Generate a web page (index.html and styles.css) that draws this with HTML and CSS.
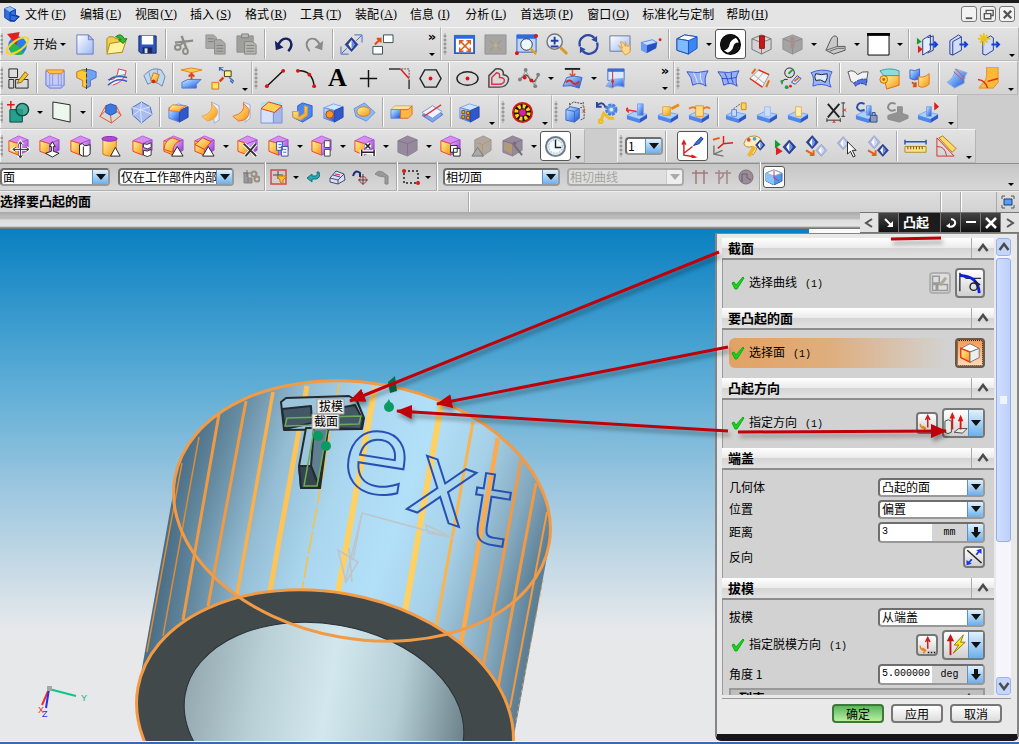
FILE: index.html
```html
<!DOCTYPE html>
<html lang="zh-CN">
<head>
<meta charset="utf-8">
<title>凸起</title>
<link rel="stylesheet" href="styles.css">
</head>
<body>
<svg class="defs" aria-hidden="true">
  <defs>
    <linearGradient id="gb" x1="0" y1="0" x2="1" y2="1"><stop offset="0" stop-color="#d4ebff"/><stop offset=".5" stop-color="#6ba2f6"/><stop offset="1" stop-color="#2348c8"/></linearGradient>
    <linearGradient id="gl" x1="0" y1="0" x2="1" y2="1"><stop offset="0" stop-color="#fff"/><stop offset="1" stop-color="#9db8f4"/></linearGradient>
    <linearGradient id="gy" x1="0" y1="0" x2="1" y2="1"><stop offset="0" stop-color="#fff6a0"/><stop offset="1" stop-color="#f79410"/></linearGradient>
    <linearGradient id="gp" x1="0" y1="0" x2="1" y2="1"><stop offset="0" stop-color="#ecc6ff"/><stop offset="1" stop-color="#8d22d0"/></linearGradient>
    <linearGradient id="skin" gradientUnits="userSpaceOnUse" x1="263" y1="0" x2="641" y2="0" gradientTransform="skewX(-10)">
      <stop offset="0" stop-color="#4b6f86"/><stop offset=".1" stop-color="#668ca2"/><stop offset=".25" stop-color="#94bdd4"/><stop offset=".42" stop-color="#abd8f0"/><stop offset=".6" stop-color="#b2e0f8"/><stop offset=".76" stop-color="#a5d0e8"/><stop offset=".9" stop-color="#84a8bd"/><stop offset="1" stop-color="#5c7f95"/>
    </linearGradient>
    <linearGradient id="bore" x1="0" y1="0" x2="1" y2="0"><stop offset="0" stop-color="#94a9b0"/><stop offset=".25" stop-color="#b9d0d6"/><stop offset=".5" stop-color="#d2e8ee"/><stop offset=".75" stop-color="#b4cdd4"/><stop offset="1" stop-color="#6c828a"/></linearGradient>
    <marker id="head" viewBox="0 0 16 14" refX="15" refY="7" markerWidth="16" markerHeight="14" markerUnits="userSpaceOnUse" orient="auto"><path d="M0 0 16 7 0 14Z" fill="#c00008" stroke="none"/></marker>
    <symbol id="cubeP" viewBox="0 0 24 24"><path d="M2 6 12 1 22 5 12 9Z" fill="#d78df4" stroke="#b860e0"/><path d="M2 6 12 9V21L2 17Z" fill="url(#gy)" stroke="#f04418"/><path d="M12 9 22 5V16L12 21Z" fill="url(#gp)" stroke="#a050cc"/></symbol>
    <symbol id="cubeG" viewBox="0 0 24 24"><path d="M2 6 12 1 22 5V16L12 22 2 18Z" fill="#96899e" stroke="#8d8198"/><path d="M2 6 12 9 22 5M12 9V21" stroke="#7f738a"/></symbol>
    <symbol id="cubeB" viewBox="0 0 24 24"><path d="M2 7 12 3 22 6 13 10Z" fill="#cfe6ff" stroke="#7ba5ee"/><path d="M2 7 13 10V22L2 18Z" fill="url(#gb)" stroke="#5c88e8"/><path d="M13 10 22 6V17L13 22Z" fill="#3158c8" stroke="#274ab2"/></symbol>
    <symbol id="base" viewBox="0 0 24 24"><path d="M1 15 9 11 22 14 14 19Z" fill="#add0ff" stroke="#7ba5ee"/><path d="M1 15 14 19V23L1 19Z" fill="#4d86ec" stroke="none"/><path d="M14 19 22 14V18L14 23Z" fill="#2c57c6" stroke="none"/></symbol>
    <symbol id="eye" viewBox="0 0 24 24"><path d="M12 1 22 12 12 23 2 12Z" fill="#2c4296" stroke="#1c2c78"/><path d="M12 5 17 12 12 19 7 12Z" fill="#fff" stroke="none"/><path d="M12 5 17 12 12 19Z" fill="#5b8cf0" stroke="none"/></symbol>
    <symbol id="eyeL" viewBox="0 0 24 24"><path d="M12 1 22 12 12 23 2 12Z" fill="#aeb7dc" stroke="#8e98c8"/><path d="M12 5 17 12 12 19 7 12Z" fill="#fff" stroke="none"/><path d="M12 5 17 12 12 19Z" fill="#c8d8f4" stroke="none"/></symbol>
    <symbol id="tick" viewBox="0 0 14 14"><path d="M1 7 3 6 5 9 12 1 13 2 6 13 4 13Z" fill="#18d21c" stroke="#0fae12"/></symbol>
    <symbol id="up" viewBox="0 0 12 10"><path d="M1.500 8 6 2 10.500 8" stroke="#4a4a4a" stroke-width="2.500"/></symbol>
  </defs>
</svg>

<div class="app">
<header class="menubar">
  <svg class="i logo" viewBox="0 0 20 20"><path d="M3 4 9 2 15 5V11L19 13 14 18 9 18 3 14Z" fill="#2f6fe0" stroke="#143c9c"/><path d="M3 4 9 2 15 5 9 8Z" fill="#8cc0ff" stroke="none"/><path d="M9 8 15 5M9 8V17L14 18 19 13 10 11" stroke="#0e2c80"/></svg>
  <nav class="menu">
    <a href="#">文件<span>(<u>F</u>)</span></a><a href="#">编辑<span>(<u>E</u>)</span></a><a href="#">视图<span>(<u>V</u>)</span></a><a href="#">插入<span>(<u>S</u>)</span></a><a href="#">格式<span>(<u>R</u>)</span></a><a href="#">工具<span>(<u>T</u>)</span></a><a href="#">装配<span>(<u>A</u>)</span></a><a href="#">信息<span>(<u>I</u>)</span></a><a href="#">分析<span>(<u>L</u>)</span></a><a href="#">首选项<span>(<u>P</u>)</span></a><a href="#">窗口<span>(<u>O</u>)</span></a><a href="#">标准化与定制</a><a href="#">帮助<span>(<u>H</u>)</span></a>
  </nav>
  <div class="winbtns">
    <button aria-label="最小化"><svg class="i" viewBox="0 0 14 14"><path d="M3 11H10" stroke="#555" stroke-width="2"/></svg></button>
    <button aria-label="还原"><svg class="i" viewBox="0 0 14 14"><path d="M4.500 5V2.500H12V8H10M2.500 6H9.500V11.500H2.500Z" stroke="#555" stroke-width="1.500"/></svg></button>
    <button aria-label="关闭"><svg class="i" viewBox="0 0 14 14"><path d="M3 3 11 11M11 3 3 11" stroke="#555" stroke-width="2.500"/></svg></button>
  </div>
</header>

<div class="bar">
  <div class="grp">
    <span class="grip first"></span>
    <button class="start"><svg class="i big" viewBox="0 0 24 24"><circle cx="12" cy="13" r="9" fill="#2480e8" stroke="none"/><path d="M4 12Q8 8 12 13T18 21Q9 24 5 17Z" fill="#22b84a" stroke="none"/><path d="M2 2 14 0 11 13Z" fill="#e02020" stroke="none"/><ellipse cx="12" cy="13" rx="12" ry="5" transform="rotate(-35 12 13)" stroke="#f6d428" stroke-width="2"/></svg>开始<i class="tri"></i></button>
    <button class="tb" aria-label="新建"><svg class="i" viewBox="0 0 24 24"><path d="M3 2H15L20 7V22H3Z" fill="url(#gl)" stroke="#6a78c8"/><path d="M15 2V7H20Z" fill="#b6c4f4" stroke="#6a78c8"/></svg></button>
    <button class="tb" aria-label="打开"><svg class="i" viewBox="0 0 24 24"><path d="M2 6 4 4H9L11 6H18V20H2Z" fill="#f1cf48" stroke="#a88818"/><path d="M5 11 22 8 18 20 2 22Z" fill="#fff29a" stroke="#a88818"/><path d="M11 4Q17-1 20 6H23L19 11 14 7H17Q15 4 11 4Z" fill="#3aba3a" stroke="#15801a"/></svg></button>
    <button class="tb" aria-label="保存"><svg class="i" viewBox="0 0 24 24"><path d="M3 3H21V21H5L3 19Z" fill="#2e56ba" stroke="#142868"/><path d="M6 3H18V12H6Z" fill="#fff" stroke="none"/><path d="M7 15H17V21H7Z" fill="#1a2858" stroke="none"/><path d="M9 16H12V21H9Z" fill="#dce4f4" stroke="none"/></svg></button>
    <span class="sep"></span>
    <button class="tb" aria-label="剪切"><svg class="i" viewBox="0 0 24 24"><path d="M2 10 21 8M9 3 14 16" stroke="#8b8b88" stroke-width="2.500"/><ellipse cx="5" cy="15" rx="3" ry="2.500" stroke="#8b8b88" stroke-width="2"/><ellipse cx="13" cy="19" rx="2.500" ry="3" stroke="#8b8b88" stroke-width="2"/><path d="M7 13 12 9" stroke="#8b8b88" stroke-width="2"/></svg></button>
    <button class="tb" aria-label="复制"><svg class="i" viewBox="0 0 24 24"><path d="M2 2H10L13 5V16H2Z" fill="#a9a9a6" stroke="#959595"/><path d="M11 7H18L22 11V22H11Z" fill="#a9a9a6" stroke="#8c8c8c"/><path d="M4 6H10M4 9H10M13 13H20M13 16H20M13 19H20" stroke="#808080"/></svg></button>
    <button class="tb" aria-label="粘贴"><svg class="i" viewBox="0 0 24 24"><path d="M2 3H19V20H2Z" fill="#9f9f9b" stroke="#909090"/><path d="M7 1H14V5H7Z" fill="#b9b9b5" stroke="#808080"/><path d="M10 9H18L22 12V22H10Z" fill="#b4b4b0" stroke="#858585"/><path d="M12 13H20M12 16H20M12 19H20" stroke="#808080"/></svg></button>
    <span class="sep"></span>
    <button class="tb" aria-label="撤销"><svg class="i" viewBox="0 0 24 24"><path d="M6 13Q11 3 18 7 23 12 17 19" stroke="#142264" stroke-width="2.500"/><path d="M3 8 4 18 12 15Z" fill="#142264" stroke="none"/></svg></button>
    <button class="tb" aria-label="重做"><svg class="i" viewBox="0 0 24 24"><path d="M18 13Q13 3 6 7 1 12 7 19" stroke="#8a8a8a" stroke-width="2"/><path d="M21 8 20 18 12 15Z" fill="#8a8a8a" stroke="none"/></svg></button>
    <span class="sep"></span>
    <button class="tb" aria-label="替换视图"><svg class="i" viewBox="0 0 24 24"><use href="#eye" x="4" y="4" width="16" height="16"/><path d="M1 14V22H9M2 21 7 16M15 2H23V10M22 3 17 8" stroke="#3c64c8"/></svg></button>
    <button class="tb" aria-label="窗口切换"><svg class="i" viewBox="0 0 24 24"><path d="M13 2H23V10H13ZM2 14H12V22H2Z" fill="#fff" stroke="#30504c"/><path d="M4 12 9 7M6 6H10V10" stroke="#e84a10" stroke-width="2"/></svg></button>
    <button class="more" aria-label="更多"><b>»</b><i class="tri"></i></button>
  </div>
  <div class="grp">
    <span class="grip"></span>
    <button class="tb" aria-label="适合窗口"><svg class="i" viewBox="0 0 24 24"><path d="M2 3H22V21H2Z" fill="#fff" stroke="#2d5fc8" stroke-width="2"/><path d="M1 2H23V6H1Z" fill="#2d6ae0" stroke="none"/><path d="M8 9 17 18M17 9 8 18M7 12V8H11M14 8H18V12M7 15V19H11M14 19H18V15" stroke="#e05a18" stroke-width="1.500"/></svg></button>
    <button class="tb" aria-label="适合选择"><svg class="i" viewBox="0 0 24 24"><path d="M1 2H23V22H1Z" fill="#a5a5a5" stroke="#949494"/><path d="M6 8 18 18M18 8 6 18" stroke="#aa9c6c" stroke-width="1.500"/><path d="M10 11H14V15H10Z" fill="#b4b0a0" stroke="none"/></svg></button>
    <button class="tb" aria-label="缩放窗口"><svg class="i" viewBox="0 0 24 24"><path d="M2 2H22V20H2Z" fill="#bcd6fc" stroke="#2d5fc8"/><path d="M2 2H22V6H2Z" fill="#2d6ae0" stroke="none"/><circle cx="12" cy="12" r="6" fill="#eef8ff" stroke="#333"/><path d="M16 16 22 22" stroke="#e0a020" stroke-width="2.500"/><circle cx="22" cy="3" r="2" fill="#e01010" stroke="none"/><circle cx="2" cy="21" r="2" fill="#e01010" stroke="none"/></svg></button>
    <button class="tb" aria-label="缩放"><svg class="i" viewBox="0 0 24 24"><circle cx="9" cy="9" r="8" fill="#e4ebf6" stroke="#777" stroke-width="1.500"/><path d="M5 8H13M9 4V12M5 14H13" stroke="#263c9a" stroke-width="2"/><path d="M15 15 22 22" stroke="#d69a28" stroke-width="3"/></svg></button>
    <button class="tb" aria-label="旋转"><svg class="i" viewBox="0 0 24 24"><path d="M3 14A9 9 0 0 1 18 5M21 10A9 9 0 0 1 6 19" stroke="#2c49a4" stroke-width="2.500"/><path d="M21 3V10L15 7ZM3 21V14L9 17Z" fill="#2c49a4" stroke="none"/></svg></button>
    <button class="tb" aria-label="平移"><svg class="i" viewBox="0 0 24 24"><path d="M2 3H23V19H2Z" fill="url(#gl)" stroke="#6d7894"/><path d="M11 13 15 16 13 9 16 10 18 14 18 9 20 14 23 13V20L18 23Z" fill="#ffd68a" stroke="#d8a050"/></svg></button>
    <button class="tb" aria-label="透视"><svg class="i" viewBox="0 0 24 24"><path d="M2 10 14 7 19 10 8 13Z" fill="#c2ddff" stroke="#5b86e0"/><path d="M2 10 8 13V21L2 18Z" fill="#6b9cf4" stroke="none"/><path d="M8 13 19 10 18 16 8 21Z" fill="#2450c4" stroke="none"/><circle cx="22" cy="7" r="1.500" fill="#e02020" stroke="none"/></svg></button>
    <span class="sep"></span>
    <button class="tb" aria-label="定向视图"><svg class="i" viewBox="0 0 24 24"><path d="M1 6 9 2 22 4V16L13 22 1 18Z" fill="#3c86f4" stroke="#1c50b4"/><path d="M1 6 9 2 22 4 13 8Z" fill="#fff" stroke="#1c50b4"/><path d="M1 6 13 8V22L1 18Z" fill="#80baff" stroke="#1c50b4"/></svg></button><button class="dd" aria-label="更多视图"><i class="tri"></i></button>
    <button class="tb on" aria-label="着色"><svg class="i" viewBox="0 0 24 24"><circle cx="12" cy="12" r="10" fill="#fff" stroke="#000" stroke-width="2"/><path d="M15 2A10 10 0 0 0 4 18Q10 18 11 12 12 7 18 5ZM22 10Q16 9 15 14 14 19 8 21 20 24 22 10Z" fill="#111" stroke="none"/></svg></button>
    <button class="tb" aria-label="剖切"><svg class="i" viewBox="0 0 24 24"><path d="M2 6 12 2 22 6V17L12 22 2 17ZM2 6 12 10 22 6M12 10V22" stroke="#777" fill="#d2d2d2"/><path d="M10 3H15V16H10Z" fill="#c81818" stroke="#881010"/></svg></button>
    <button class="tb" aria-label="编辑剖切"><svg class="i" viewBox="0 0 24 24"><path d="M2 6 12 2 22 6V17L12 22 2 17Z" fill="#a3a3a3" stroke="#919191"/><path d="M2 6 12 10 22 6M12 10V22" stroke="#8c8c8c"/><path d="M10 4H14V16H10Z" fill="#a98e8e" stroke="none"/></svg></button><button class="dd" aria-label="剖切选项"><i class="tri"></i></button>
    <button class="tb" aria-label="线框"><svg class="i" viewBox="0 0 24 24"><path d="M2 18 8 5Q12 1 14 5V14L22 14V18L10 22Z" fill="#c9c9c9" stroke="#555"/><path d="M2 18 14 14M6 19 14 16H21" stroke="#666"/></svg></button><button class="dd" aria-label="线框选项"><i class="tri"></i></button>
    <button class="tb" aria-label="背景"><svg class="i" viewBox="0 0 24 24"><path d="M1 1H23V23H1Z" fill="#fff" stroke="#000"/><path d="M0 0H24V3H0Z" fill="#000" stroke="none"/></svg></button><button class="dd" aria-label="背景选项"><i class="tri"></i></button>
    <span class="sep"></span>
    <button class="tb" aria-label="显示截面"><svg class="i" viewBox="0 0 24 24"><path d="M7 7 15 2V18L7 23Z" fill="#e4edff" stroke="#243c94"/><path d="M12 5 18 3V18L12 21" stroke="#243c94"/><path d="M1 5 6 9 1 12Z" fill="#10a030" stroke="none"/><path d="M2 13 7 17 2 21Z" fill="#e02020" stroke="none"/><path d="M14 12H21M19 9 22 12 19 15" stroke="#1040d8" stroke-width="2"/></svg></button>
    <button class="tb" aria-label="截面"><svg class="i" viewBox="0 0 24 24"><path d="M3 8 12 2 15 4V18L6 23 3 22Z" fill="#d2dcf6" stroke="#243c94"/><path d="M6 9 15 4M6 9V23" stroke="#243c94"/><path d="M13 12H21M18 9 21 12 18 15" stroke="#1040d8" stroke-width="2"/></svg></button>
    <button class="tb" aria-label="新建截面"><svg class="i" viewBox="0 0 24 24"><path d="M5 8 13 3 16 5V18L8 23 5 22Z" fill="#d2dcf6" stroke="#243c94"/><path d="M6 0V13M0 6H13M2 2 10 10M10 2 2 10" stroke="#e9c41c" stroke-width="2"/><path d="M14 12H22M19 9 22 12 19 15" stroke="#1040d8" stroke-width="2"/></svg></button>
    <button class="over" aria-label="更多"><i class="tri"></i></button>
  </div>
</div>

<div class="bar">
  <div class="grp">
    <span class="grip first"></span>
    <button class="tb" aria-label="草图"><svg class="i" viewBox="0 0 24 24"><path d="M2 2H11V11H2ZM2 13H7V22H2ZM9 13H22V22H9Z" stroke="#222"/><path d="M12 14 19 5 22 8 15 16 11 17Z" fill="#f4c428" stroke="#8a6210"/></svg></button>
    <span class="sep"></span>
    <button class="tb" aria-label="拉伸"><svg class="i" viewBox="0 0 24 24"><path d="M2 4V19L6 22H18L21 19V4Z" fill="#c4cdf8" stroke="#6676d4"/><path d="M2 19H21M6 7V22M18 7V22M9 7V19M15 7V19" stroke="#8c9ae4"/><path d="M2 3H21L18 7H6Z" fill="#ffc048" stroke="#e07c18"/></svg></button>
    <button class="tb" aria-label="回转"><svg class="i" viewBox="0 0 24 24"><path d="M2 5Q12 0 22 5V11Q18 13 16 14V20L12 22 8 20V14L2 11Z" fill="#6ea2f4" stroke="#4a6fc8"/><path d="M2 5Q7 2 12 5V22L8 20V14L2 11Z" fill="#ffc838" stroke="#e08818"/><path d="M12 1V23" stroke="#333" stroke-dasharray="4 2"/></svg></button>
    <button class="tb" aria-label="扫掠"><svg class="i" viewBox="0 0 24 24"><path d="M2 13Q12 15 13 2L21 4Q20 15 7 19" fill="#f2f4fa" stroke="#d83850"/><path d="M3 14Q8 8 22 11M2 19Q12 10 22 15" stroke="#3c58c8" stroke-width="1.500"/><path d="M8 10 20 8" stroke="#38a068"/></svg></button>
    <span class="sep"></span>
    <button class="tb" aria-label="管道"><svg class="i" viewBox="0 0 24 24"><path d="M1 9Q9-1 19 3L23 10 20 20Q12 13 5 18Z" fill="#bfd7f2" stroke="#6b88a8"/><path d="M6 5 9 16M15 2 15 15" stroke="#7d9cbc"/><path d="M11 6 17 8 14 16 8 14Z" fill="url(#gy)" stroke="#c87810"/><circle cx="11" cy="15" r="2" fill="#d82c10" stroke="none"/></svg></button>
    <span class="sep"></span>
    <button class="tb" aria-label="凸起片体"><svg class="i" viewBox="0 0 24 24"><path d="M1 3 12 1 23 3 12 6Z" fill="#ffc850" stroke="#e88418"/><path d="M12 14V8M9 10 12 7 15 10" stroke="#d84818" stroke-width="2"/><path d="M2 16 8 13H22L17 18V22H2Z" fill="url(#gb)" stroke="#4a78d8"/></svg></button>
    <button class="tb" aria-label="偏置"><svg class="i" viewBox="0 0 24 24"><path d="M1 16H8V23H1Z" fill="#ffe460" stroke="#e07010"/><path d="M14 4H21V10H14Z" fill="#fff080" stroke="#333"/><path d="M9 15 13 11" stroke="#e83810" stroke-width="2.500"/><path d="M9 1 13 4M9 4V0H13M20 14 23 17M19 11 24 15" stroke="#3c64c8" stroke-width="1.500"/></svg></button>
    <button class="over" aria-label="更多"><i class="tri"></i></button>
  </div>
  <div class="grp">
    <span class="grip"></span>
    <button class="tb" aria-label="直线"><svg class="i" viewBox="0 0 24 24"><path d="M3 20 20 4" stroke="#111" stroke-width="1.500"/><circle cx="3" cy="20" r="2" fill="#e01010" stroke="none"/><circle cx="20" cy="4" r="2" fill="#e01010" stroke="none"/></svg></button>
    <button class="tb" aria-label="圆弧"><svg class="i" viewBox="0 0 24 24"><path d="M3 4Q18 3 20 20" stroke="#111" stroke-width="1.500"/><g fill="#e01010" stroke="none"><circle cx="3" cy="4" r="2"/><circle cx="15" cy="8" r="2"/><circle cx="20" cy="20" r="2"/></g></svg></button>
    <button class="tb letter">A</button>
    <button class="tb" aria-label="点"><svg class="i" viewBox="0 0 24 24"><path d="M12 3V21M3 12H21" stroke="#111" stroke-width="1.500"/></svg></button>
    <button class="tb" aria-label="倒斜角"><svg class="i" viewBox="0 0 24 24"><path d="M1 2H13M22 13V23" stroke="#333" stroke-width="1.500"/><path d="M13 2 22 12" stroke="#e01818" stroke-width="1.500"/><path d="M14 2H22V12" stroke="#555" stroke-dasharray="2 1"/></svg></button>
    <button class="tb" aria-label="多边形"><svg class="i" viewBox="0 0 24 24"><path d="M1 12 6 3H18L23 12 18 21H6Z" stroke="#222" stroke-width="1.500"/><circle cx="12" cy="12" r="2" fill="#e01010" stroke="none"/></svg></button>
    <span class="sep"></span>
    <button class="tb" aria-label="椭圆"><svg class="i" viewBox="0 0 24 24"><ellipse cx="12" cy="12" rx="11" ry="7" stroke="#222" stroke-width="1.500"/><circle cx="12" cy="12" r="2" fill="#e01010" stroke="none"/></svg></button>
    <button class="tb" aria-label="偏置曲线"><svg class="i" viewBox="0 0 24 24"><path d="M2 21V9L9 2Q18 1 17 8 24 9 22 15 20 21 13 21Z" stroke="#444" stroke-width="1.500"/><path d="M5 18V11L10 6Q14 6 13 11 19 11 18 15 17 18 13 18Z" stroke="#e03048" stroke-width="1.500"/></svg></button>
    <button class="tb" aria-label="样条"><svg class="i" viewBox="0 0 24 24"><path d="M2 14Q8 4 12 12T21 9" stroke="#555" stroke-width="1.500"/><path d="M3 13 8 4 17 19 21 8" stroke="#999"/><g fill="#808080" stroke="none"><circle cx="8" cy="3" r="2"/><circle cx="2" cy="13" r="2"/><circle cx="21" cy="8" r="2"/><circle cx="18" cy="20" r="2"/></g><circle cx="7" cy="11" r="2" fill="#e01010" stroke="none"/><circle cx="14" cy="14" r="2" fill="#e01010" stroke="none"/></svg></button><button class="dd" aria-label="样条选项"><i class="tri"></i></button>
    <button class="tb" aria-label="投影曲线"><svg class="i" viewBox="0 0 24 24"><path d="M4 2H20" stroke="#222" stroke-width="2"/><path d="M12 3V9M9 7 12 10 15 7" stroke="#e05020" stroke-width="1.500"/><path d="M2 20 6 11Q13 8 22 11L19 22Q10 18 2 20Z" fill="url(#gb)" stroke="#3c68c8"/><path d="M5 16Q9 12 12 16T19 15" stroke="#e02828" stroke-width="2"/></svg></button><button class="dd" aria-label="投影选项"><i class="tri"></i></button>
    <button class="tb" aria-label="相交曲线"><svg class="i" viewBox="0 0 24 24"><path d="M4 2H21V14H4Z" fill="#dceaff" stroke="#4070c8"/><path d="M4 2H21V5H4Z" fill="#3a6cd8" stroke="none"/><path d="M2 20 7 13 21 12V21Q12 18 9 22Z" fill="url(#gb)" stroke="#88a8e0"/><path d="M9 4V21" stroke="#d82828"/><circle cx="9" cy="15" r="1.500" fill="#d82828" stroke="none"/></svg></button>
    <button class="more" aria-label="更多"><b>»</b><i class="tri"></i></button>
  </div>
  <div class="grp">
    <span class="grip"></span>
    <button class="tb" aria-label="直纹"><svg class="i" viewBox="0 0 24 24"><path d="M1 5Q12 7 23 4Q18 12 21 20Q14 15 7 19Q6 10 1 5Z" fill="#98b0f6" stroke="#3454c8"/><path d="M8 6Q11 12 12 17M15 6Q14 12 17 17" stroke="#e4ecff"/></svg></button>
    <button class="tb" aria-label="通过曲线网格"><svg class="i" viewBox="0 0 24 24"><path d="M1 5Q12 7 23 4Q18 12 21 20Q14 15 7 19Q6 10 1 5Z" fill="#98b0f6" stroke="#3454c8"/><path d="M8 6Q11 12 12 17M15 6Q14 12 17 17M5 12Q12 13 20 11" stroke="#2c4cc0"/></svg></button>
    <button class="tb" aria-label="扫掠曲面"><svg class="i" viewBox="0 0 24 24"><path d="M2 12 11 3 22 8 15 21Z" fill="#f4f4f6" stroke="#999"/><path d="M6 8 17 17M8 15 17 5" stroke="#aaa"/><path d="M2 12 15 21M11 3 22 8" stroke="#e82c18" stroke-width="1.500"/><path d="M4 7 8 2M19 21 22 14" stroke="#e86a18" stroke-width="2"/></svg></button>
    <button class="tb" aria-label="截面曲面"><svg class="i" viewBox="0 0 24 24"><circle cx="11" cy="6" r="5" stroke="#222"/><path d="M10 7 15 2" stroke="#20a040" stroke-width="2"/><path d="M3 18Q3 12 9 13" stroke="#222"/><circle cx="3" cy="15" r="1.500" fill="#20a040" stroke="none"/><circle cx="8" cy="21" r="2" fill="#20a040" stroke="none"/><circle cx="12" cy="20" r="1.500" fill="#e02020" stroke="none"/><path d="M13 16 19 9 23 12 17 18Z" fill="#dce6ff" stroke="#2c50b8"/><path d="M16 15 21 11" stroke="#e06a18" stroke-width="2"/></svg></button>
    <button class="tb" aria-label="N边曲面"><svg class="i" viewBox="0 0 24 24"><path d="M1 6Q12 1 23 5Q18 14 22 21Q12 16 3 20Q5 10 1 6Z" fill="#98b4f6" stroke="#3c5cd0"/><path d="M6 7Q12 9 18 7 19 11 16 16 11 12 6 14 4 10 6 7Z" fill="#dceaff" stroke="#222"/></svg></button>
    <span class="sep"></span>
    <button class="tb" aria-label="缝合"><svg class="i" viewBox="0 0 24 24"><path d="M1 5Q7 2 11 8 16 4 22 5L20 17Q14 13 9 19 6 15 4 15Z" fill="#f3f3f3" stroke="#555"/><path d="M7 17Q14 11 21 13L20 19Q14 15 9 20Z" fill="#5474e0" stroke="#2038a0" stroke-dasharray="3 1"/></svg></button>
    <button class="tb" aria-label="修剪片体"><svg class="i" viewBox="0 0 24 24"><path d="M2 4Q12 0 22 4V9H6Z" fill="#8fdcdc" stroke="#38a0a0"/><path d="M6 9H22V19L9 23Z" fill="url(#gy)" stroke="#e06818"/><circle cx="6" cy="13" r="4" fill="#ffd848" stroke="#b86a10"/><circle cx="6" cy="13" r="1.500" fill="#e84818" stroke="none"/></svg></button>
    <button class="tb" aria-label="延伸片体"><svg class="i" viewBox="0 0 24 24"><path d="M1 3Q6 5 11 2V12Q6 15 1 12Z" fill="url(#gb)" stroke="#3c68d0"/><path d="M10 10Q15 12 21 7V18Q15 23 10 20Z" fill="url(#gy)" stroke="#e07818"/><path d="M3 16 7 19M4 20H7V16" stroke="#d85018" stroke-width="2"/></svg></button>
    <span class="sep"></span>
    <button class="tb" aria-label="面倒圆"><svg class="i" viewBox="0 0 24 24"><path d="M10 2 22 6Q18 11 19 17L9 22 1 16Q8 12 10 2Z" fill="url(#gb)" stroke="#8cb0e8"/><path d="M10 2 20 12M8 5 18 14" stroke="#e04848"/></svg></button>
    <button class="tb" aria-label="软倒圆"><svg class="i" viewBox="0 0 24 24"><path d="M10 0H22V16L17 22H2L6 17Q10 14 10 9Z" fill="#ffb838" stroke="#f08c18"/><path d="M1 13Q9 14 11 22M11 15 22 12" stroke="#e03018" stroke-width="1.500"/></svg></button>
    <button class="over" aria-label="更多"><i class="tri"></i></button>
  </div>
</div>

<div class="bar">
  <div class="grp">
    <span class="grip first"></span>
    <button class="tb" aria-label="设计特征"><svg class="i" viewBox="0 0 24 24"><path d="M3 9H16V22H3Z" fill="#25a08c" stroke="#0c4a40"/><circle cx="16" cy="9" r="6.500" fill="#25a08c" fill-opacity=".8" stroke="#0c4a40" stroke-width="1.500"/><path d="M4 0V8M0 4H8" stroke="#e01818" stroke-width="1.500"/></svg></button><button class="dd" aria-label="特征选项"><i class="tri"></i></button>
    <button class="tb" aria-label="基准平面"><svg class="i" viewBox="0 0 24 24"><path d="M3 1 21 4V22L3 18Z" fill="#edf7ee" stroke="#222"/></svg></button><button class="dd" aria-label="基准选项"><i class="tri"></i></button>
    <span class="sep"></span>
    <button class="tb" aria-label="基准体"><svg class="i" viewBox="0 0 24 24"><path d="M7 5 12 3 18 5V12L12 15 7 12Z" fill="#3c78e0" stroke="#2a50b0"/><path d="M7 10 1 16 13 23 23 15 18 10M7 5 1 16M18 5 23 15M12 15 13 23" stroke="#e05828"/></svg></button>
    <button class="tb" aria-label="球体"><svg class="i" viewBox="0 0 24 24"><path d="M12 1 21 6 23 14 12 23 3 15 2 7Z" fill="#a8bcf0" stroke="#4b6fc0"/><path d="M2 7 11 9 21 6M11 9 12 23M3 15 11 9 23 14M12 1 11 9" stroke="#dce6ff"/></svg></button>
    <span class="sep"></span>
    <button class="tb" aria-label="边倒圆"><svg class="i" viewBox="0 0 24 24"><use href="#cubeB" width="24" height="24"/><path d="M2 10Q2 6 6 4L20 5Q14 7 13 11Z" fill="url(#gy)" stroke="#e87828"/></svg></button>
    <button class="tb" aria-label="面倒圆"><svg class="i" viewBox="0 0 24 24"><path d="M14 1 22 5V20L17 23Z" fill="#e8eefa" stroke="#a0b0d0"/><path d="M14 2Q17 12 4 16L10 21Q22 18 20 9Z" fill="url(#gy)" stroke="#f0a050"/></svg></button>
    <button class="tb" aria-label="软倒圆"><svg class="i" viewBox="0 0 24 24"><path d="M15 1 22 4V18L17 22Z" fill="#e8eefa" stroke="#a0b0d0"/><path d="M15 2Q18 12 4 16L10 21Q22 20 21 9Z" fill="url(#gy)" stroke="#e87038"/></svg></button>
    <button class="tb" aria-label="倒斜角"><svg class="i" viewBox="0 0 24 24"><path d="M1 1H23V23H1Z" fill="#a4e6fa" stroke="none"/><path d="M1 9 10 2 23 6 14 13V23H1Z" fill="#d5e0fa" stroke="#7b94d8"/><path d="M14 13 23 6V23H14Z" fill="#a4b8ec" stroke="#7b94d8"/><path d="M1 8 9 1 23 5 15 12Z" fill="#ffd058" stroke="#e83818"/></svg></button>
    <button class="tb" aria-label="抽壳"><svg class="i" viewBox="0 0 24 24"><path d="M12 2 22 5V16L12 22 2 17V11H7V5Z" fill="#4c88ec" stroke="#2c60c8"/><path d="M2 11H8V17L14 13V5L17 6V15L10 20 2 17Z" fill="url(#gy)" stroke="#e0a038"/></svg></button>
    <button class="tb" aria-label="孔"><svg class="i" viewBox="0 0 24 24"><use href="#cubeB" width="24" height="24"/><circle cx="8" cy="14" r="4" fill="#ff9820" stroke="#a84010"/></svg></button>
    <button class="tb" aria-label="凸台"><svg class="i" viewBox="0 0 24 24"><path d="M1 8 12 2 23 12 14 21 3 16Z" fill="#8cb8f4" stroke="#6094e8"/><ellipse cx="11" cy="11" rx="7" ry="5" fill="url(#gy)" stroke="#d07828"/></svg></button>
    <span class="sep"></span>
    <button class="tb" aria-label="修剪体"><svg class="i" viewBox="0 0 24 24"><path d="M1 9 5 5H23L19 9Z" fill="#ffe0a0" stroke="#c8b088"/><path d="M1 9H11V18H1Z" fill="url(#gb)" stroke="#5c88d8"/><path d="M11 9H19L23 5V14L19 18H11Z" fill="#ffb848" stroke="#e06a18"/></svg></button>
    <button class="tb" aria-label="拆分"><svg class="i" viewBox="0 0 24 24"><path d="M1 15 12 8 23 14 12 22Z" fill="#7ca8f0" stroke="#5080d0"/><path d="M1 12 12 5 22 11 12 18Z" fill="#eef4ff" stroke="#7898d0"/><path d="M3 16 21 4" stroke="#e03838" stroke-width="1.500"/></svg></button>
    <span class="sep"></span>
    <button class="tb" aria-label="阵列"><svg class="i" viewBox="0 0 24 24"><use href="#cubeB" width="24" height="24"/><g fill="#ffb020" stroke="#8a4a10"><path d="M4 10H7V13H4ZM9 11H12V14H9ZM4 15H7V18H4ZM9 16H12V19H9Z"/></g></svg></button>
    <button class="over" aria-label="更多"><i class="tri"></i></button>
  </div>
  <div class="grp">
    <span class="grip"></span>
    <button class="tb" aria-label="齿轮"><svg class="i" viewBox="0 0 24 24"><circle cx="12" cy="12" r="10" fill="#111" stroke="#d81818" stroke-width="2"/><circle cx="12" cy="12" r="6.500" stroke="#f6d818" stroke-width="4" stroke-dasharray="3 2"/><circle cx="12" cy="12" r="3.500" fill="#c428b8" stroke="#d81818"/></svg></button>
    <button class="over" aria-label="更多"><i class="tri"></i></button>
  </div>
  <div class="grp">
    <span class="grip"></span>
    <button class="tb" aria-label="编辑参数"><svg class="i" viewBox="0 0 24 24"><path d="M2 9 7 6 16 8V18L11 22 2 20Z" fill="url(#gb)" stroke="#3868c8"/><path d="M11 11 16 8M11 11V22M2 9 11 11" stroke="#3868c8"/><path d="M6 4 10 1 20 3M17 7 21 6V18L17 20M6 2V6M20 1V5" stroke="#444" stroke-dasharray="2 1"/><path d="M19 9 22 12M22 9 19 12" stroke="#d83838"/></svg></button>
    <button class="tb" aria-label="编辑定位"><svg class="i" viewBox="0 0 24 24"><path d="M2 5Q8-1 11 7M2 1V6H7" stroke="#2c4498" stroke-width="2"/><circle cx="17" cy="9" r="5" fill="#6aa0ec" stroke="#4c80dc" stroke-width="3" stroke-dasharray="3 1"/><circle cx="17" cy="9" r="2" fill="#dce8f8" stroke="none"/><path d="M6 21 9 13 15 18 20 18" stroke="#f0bc20" stroke-width="3"/><circle cx="6" cy="21" r="2" stroke="#f0bc20" stroke-width="2"/></svg></button>
    <button class="tb" aria-label="移动特征"><svg class="i" viewBox="0 0 24 24"><use href="#base" width="24" height="24"/><path d="M12 3H18V15H12Z" fill="url(#gb)" stroke="#7ca0e4"/><path d="M0 9 11 11M2 7 0 9 3 12" stroke="#e03030" stroke-width="1.500"/></svg></button>
    <button class="tb" aria-label="特征重排"><svg class="i" viewBox="0 0 24 24"><use href="#base" width="24" height="24"/><path d="M6 6H14V15H6Z" fill="url(#gy)" stroke="#e0a040"/><path d="M23 4 15 8" stroke="#e88a20" stroke-width="3"/></svg></button>
    <button class="tb" aria-label="替换特征"><svg class="i" viewBox="0 0 24 24"><use href="#base" width="24" height="24"/><path d="M8 5H16V16H8Z" fill="#ffe080" stroke="#e89030"/><path d="M1 8Q6 5 8 8M16 8Q20 5 23 8" stroke="#e87828" stroke-width="2"/></svg></button>
    <span class="sep"></span>
    <button class="tb" aria-label="抑制"><svg class="i" viewBox="0 0 24 24"><use href="#base" width="24" height="24"/><path d="M7 9H12V16H7Z" fill="#c5d8ff" stroke="#6088d8"/><path d="M17 2H22V9H17Z" fill="#ffd458" stroke="#d88818"/><path d="M9 8 16 3" stroke="#555" stroke-dasharray="2 1"/></svg></button>
    <button class="tb" aria-label="隐藏特征"><svg class="i" viewBox="0 0 24 24"><use href="#base" width="24" height="24"/><path d="M9 6H15V16H9Z" fill="#c9ddff" stroke="#a4bcea"/></svg></button>
    <button class="tb" aria-label="取消抑制"><svg class="i" viewBox="0 0 24 24"><use href="#base" width="24" height="24"/><path d="M9 6H15V16H9Z" fill="#fff0b0" stroke="#f0a850"/></svg></button>
    <span class="sep"></span>
    <button class="tb" aria-label="移除参数"><svg class="i" viewBox="0 0 24 24"><path d="M4 3 16 17M16 3 4 17" stroke="#222" stroke-width="2"/><path d="M20 2V16M18 2H22M18 16H22M3 20H17M3 18V22M17 18V22" stroke="#333"/><path d="M20 8 23 11M23 8 20 11M9 20 12 23M12 20 9 23" stroke="#e02020"/></svg></button>
    <button class="tb" aria-label="延迟更新"><svg class="i" viewBox="0 0 24 24"><use href="#base" width="24" height="24"/><path d="M12 5H17V15H12Z" fill="url(#gb)" stroke="#7ca0e4"/><path d="M10 3Q3 0 2 7 4 12 10 9" stroke="#2c50a8" stroke-width="2"/><path d="M16 15H23V22H16Z" fill="#8c9cc0" stroke="#3c4c78"/><path d="M18 15V12H21V15" stroke="#3c4c78"/></svg></button>
    <button class="tb" aria-label="更新"><svg class="i" viewBox="0 0 24 24"><path d="M2 15 12 12V6H17V13L23 15V18L14 22 2 19Z" fill="#929292" stroke="#8c8c8c"/><path d="M10 3Q3 0 2 7 4 12 10 9" stroke="#8a8a8a" stroke-width="2"/></svg></button>
    <button class="tb" aria-label="回放"><svg class="i" viewBox="0 0 24 24"><use href="#base" width="24" height="24"/><path d="M10 6H15V16H10Z" fill="url(#gb)" stroke="#7ca0e4"/><path d="M18 1 23 6 18 10Z" fill="#e01818" stroke="none"/></svg></button>
    <button class="over" aria-label="更多"><i class="tri"></i></button>
  </div>
</div>

<div class="bar">
  <div class="grp">
    <span class="grip first"></span>
    <button class="tb" aria-label="移动面"><svg class="i" viewBox="0 0 24 24"><use href="#cubeP" width="24" height="24"/><path d="M14 8V23M7 15H22M12 10 14 7 16 10M12 21 14 24 16 21M9 13 6 15 9 17M20 13 23 15 20 17" stroke="#fff" stroke-width="3"/><path d="M14 8V23M7 15H22M12 10 14 7 16 10M12 21 14 24 16 21M9 13 6 15 9 17M20 13 23 15 20 17" stroke="#222"/></svg></button>
    <button class="tb" aria-label="拉出面"><svg class="i" viewBox="0 0 24 24"><use href="#cubeP" width="24" height="24"/><path d="M15 7 18 12H16V17L22 19 15 23 8 19 14 17V12H12Z" fill="#fff" stroke="#222"/></svg></button>
    <button class="tb" aria-label="偏置区域"><svg class="i" viewBox="0 0 24 24"><use href="#cubeP" width="24" height="24"/><path d="M11 10 14 9 16 11H19L22 10V20L19 22H14L11 20Z" fill="#fff" stroke="#222"/><path d="M15 12V22" stroke="#222"/></svg></button>
    <button class="tb" aria-label="调整面大小"><svg class="i" viewBox="0 0 24 24"><path d="M3 4V20Q10 24 17 20V4Z" fill="url(#gy)" stroke="#e07018"/><ellipse cx="10" cy="4" rx="8" ry="2.500" fill="#b048e0" stroke="#8828b8"/><path d="M16 13 21 22H11Z" fill="#fff" stroke="#222"/></svg></button>
    <button class="tb" aria-label="替换面"><svg class="i" viewBox="0 0 24 24"><use href="#cubeP" width="24" height="24"/><path d="M13 9Q17 11 21 8V13Q17 16 13 13ZM13 16Q17 18 21 15V21Q17 24 13 21Z" fill="#fff" stroke="#333"/></svg></button>
    <button class="tb" aria-label="圆角大小"><svg class="i" viewBox="0 0 24 24"><use href="#cubeP" width="24" height="24"/><path d="M2 15Q3 5 11 3L19 6Q12 8 11 18Z" fill="url(#gy)" stroke="#e04818"/><path d="M16 12 22 22H10Z" fill="#fff" stroke="#222"/></svg></button>
    <button class="tb" aria-label="倒角大小"><svg class="i" viewBox="0 0 24 24"><use href="#cubeP" width="24" height="24"/><path d="M2 10 10 3 19 7 12 15Z" fill="url(#gy)" stroke="#e03818"/><path d="M16 12 22 22H10Z" fill="#fff" stroke="#222"/></svg></button><button class="dd" aria-label="大小选项"><i class="tri"></i></button>
    <button class="tb" aria-label="删除面"><svg class="i" viewBox="0 0 24 24"><use href="#cubeP" width="24" height="24"/><path d="M8 9 21 22M21 9 10 22" stroke="#fff" stroke-width="4"/><path d="M8 9 21 22M21 9 10 22" stroke="#333" stroke-width="2"/></svg></button>
    <button class="tb" aria-label="复制面"><svg class="i" viewBox="0 0 24 24"><use href="#cubeP" width="24" height="24"/><path d="M10 7H16V16H10ZM15 12H22V22H15Z" fill="#f2f6ff" stroke="#3850a0"/><path d="M12 10H15M12 13H15M17 15H20M17 18H20" stroke="#3c68d0"/></svg></button><button class="dd" aria-label="复制选项"><i class="tri"></i></button>
    <button class="tb" aria-label="设为共面"><svg class="i" viewBox="0 0 24 24"><use href="#cubeP" width="24" height="24"/><path d="M15 6H21V13H15ZM15 15H21V22H15Z" fill="#fff" stroke="#444"/></svg></button><button class="dd" aria-label="共面选项"><i class="tri"></i></button>
    <button class="tb" aria-label="线性尺寸"><svg class="i" viewBox="0 0 24 24"><use href="#cubeP" width="24" height="24"/><path d="M13 9 18 14M18 9 13 14M9 15V22M22 15V22M9 18H22" stroke="#fff" stroke-width="4"/><path d="M13 9 18 14M18 9 13 14M9 15V22M22 15V22M9 18H22" stroke="#222" stroke-width="1.500"/></svg></button><button class="dd" aria-label="尺寸选项"><i class="tri"></i></button>
    <button class="tb" aria-label="壳体"><svg class="i" viewBox="0 0 24 24"><use href="#cubeG" width="24" height="24"/></svg></button><button class="dd" aria-label="壳体选项"><i class="tri"></i></button>
    <button class="tb" aria-label="组面"><svg class="i" viewBox="0 0 24 24"><use href="#cubeP" width="24" height="24"/><path d="M12 11H19V18H12ZM15 14H22V22H15Z" fill="#fff" stroke="#222"/></svg></button>
    <button class="tb" aria-label="横截面"><svg class="i" viewBox="0 0 24 24"><path d="M5 5 14 1 22 5V16L13 22 5 18Z" fill="#b0a8a0" stroke="#a09890"/><path d="M7 8 13 10V21M13 10 22 5" stroke="#b89858"/><path d="M8 13 14 22H2Z" fill="#aaa" stroke="#777"/></svg></button>
    <button class="tb" aria-label="编辑横截面"><svg class="i" viewBox="0 0 24 24"><use href="#cubeG" width="24" height="24"/><path d="M3 7 12 10V20L3 16Z" fill="#b09a78" stroke="none"/><path d="M14 11 22 21M12 9H16M14 7V12" stroke="#707070" stroke-width="2"/></svg></button><button class="dd" aria-label="横截面选项"><i class="tri"></i></button>
    <button class="tb on" aria-label="历史记录"><svg class="i" viewBox="0 0 24 24"><circle cx="12" cy="12" r="10" fill="#dceaf4" stroke="#6c7c88" stroke-width="2"/><circle cx="12" cy="12" r="7" fill="#f4fbff" stroke="#8899a8" stroke-dasharray="1 2"/><path d="M12 5V13H18" stroke="#222" stroke-width="1.500"/></svg></button>
    <button class="over" aria-label="更多"><i class="tri"></i></button>
  </div>
  <div class="grp apart">
    <span class="grip"></span>
    <label class="combo layer"><select aria-label="图层"><option>1</option></select><i class="arr"></i></label>
    <span class="sep wide"></span>
    <button class="tb on" aria-label="坐标系"><svg class="i" viewBox="0 0 24 24"><path d="M3 7V21L15 23M3 19 12 12M1 10 3 6 5 10M11 21 15 23 11 24" stroke="#d82020" stroke-width="1.500"/><path d="M13 11 17 6 21 2 23 4 19 9Z" fill="#3c70d8" stroke="#1c3c90"/></svg></button>
    <button class="tb" aria-label="定向坐标系"><svg class="i" viewBox="0 0 24 24"><path d="M12 1V9L22 8M12 9 6 14" stroke="#d82020" stroke-width="1.500"/><path d="M2 11V20L12 22M2 20 11 16" stroke="#777" stroke-width="1.500"/><path d="M1 5 8 3" stroke="#e86018" stroke-width="2"/></svg></button>
    <button class="tb" aria-label="对象显示"><svg class="i" viewBox="0 0 24 24"><path d="M1 9Q3 1 12 1 20 2 19 8 14 12 13 17 10 23 8 19L10 12Q2 14 1 9Z" fill="#fff0c0" stroke="#c08828"/><circle cx="6" cy="5" r="2" fill="#e84040" stroke="none"/><circle cx="12" cy="4" r="2" fill="#40a8e8" stroke="none"/><path d="M6 22 12 12" stroke="#f0b828" stroke-width="4"/><use href="#eye" x="12" y="4" width="12" height="13"/></svg></button>
    <button class="tb" aria-label="显示隐藏"><svg class="i" viewBox="0 0 24 24"><path d="M1 5 7 10 1 14Z" fill="#10a030" stroke="none"/><path d="M2 12 9 17 2 21Z" fill="#e02020" stroke="none"/><use href="#eye" x="8" y="4" width="16" height="17"/></svg></button>
    <button class="tb" aria-label="隐藏"><svg class="i" viewBox="0 0 24 24"><use href="#eye" x="0" y="0" width="15" height="15"/><use href="#eyeL" x="10" y="9" width="14" height="14"/><path d="M1 16 8 20M5 21H9V16" stroke="#e86018" stroke-width="2"/></svg></button>
    <button class="tb" aria-label="选择"><svg class="i" viewBox="0 0 24 24"><use href="#eyeL" x="0" y="1" width="15" height="15"/><path d="M12 7V20L15 17 18 23 20 22 17 16H21Z" fill="#fff" stroke="#222"/></svg></button>
    <button class="tb" aria-label="显示"><svg class="i" viewBox="0 0 24 24"><use href="#eyeL" x="0" y="0" width="15" height="15"/><use href="#eye" x="9" y="9" width="15" height="14"/><path d="M1 16 8 20M5 21H9V16" stroke="#e86018" stroke-width="2"/></svg></button>
    <span class="sep"></span>
    <button class="tb" aria-label="测量距离"><svg class="i" viewBox="0 0 24 24"><path d="M1 12H23V18H1Z" fill="#ffe28a" stroke="#b08828"/><path d="M4 12V15M7 12V15M10 12V15M13 12V15M16 12V15M19 12V15" stroke="#6c5010"/><path d="M1 5V10M23 5V10M1 7H23" stroke="#2c50b8" stroke-width="1.500"/></svg></button>
    <button class="tb" aria-label="测量角度"><svg class="i" viewBox="0 0 24 24"><path d="M2 3V22H20M2 3 20 22M2 12Q11 12 12 22" stroke="#d83030"/><path d="M4 3 8 1 22 14 18 18Z" fill="#ffd868" stroke="#a88020"/></svg></button>
    <button class="over" aria-label="更多"><i class="tri"></i></button>
  </div>
</div>

<div class="selbar">
  <label class="combo type"><select aria-label="类型过滤器"><option>面</option></select><i class="arr"></i></label>
  <label class="combo scope"><select aria-label="选择范围"><option>仅在工作部件内部</option></select><i class="arr"></i></label>
  <button class="sb" aria-label="链接"><svg class="i" viewBox="0 0 18 16"><path d="M2 4H6V14H2ZM6 9H10V14H6Z" fill="#999" stroke="#858585"/><path d="M5 1V8M1 4H9" stroke="#777"/><circle cx="12" cy="5" r="2.500" stroke="#99907c" stroke-width="2"/><circle cx="15" cy="10" r="2.500" stroke="#99907c" stroke-width="2"/></svg></button>
  <span class="sep"></span>
  <button class="sb" aria-label="过滤器"><svg class="i" viewBox="0 0 18 16"><path d="M1 1H16V15H1Z" stroke="#d84848" stroke-width="1.500"/><path d="M8 2V10M3 6H13" stroke="#444"/><path d="M7 7H17L13 11V15L10 13V11Z" fill="#ffc030" stroke="#c07818"/></svg></button><button class="dd" aria-label="过滤选项"><i class="tri"></i></button>
  <button class="sb wide" aria-label="返回"><svg class="i" viewBox="0 0 18 16"><path d="M14 3Q16 9 11 10H7V13L2 9 7 5V7H11Q13 7 12 3Z" fill="#28a8b4" stroke="#107480"/></svg></button>
  <button class="sb wide" aria-label="体"><svg class="i" viewBox="0 0 18 16"><path d="M2 9 8 2 16 5 17 11 10 15 2 13Z" fill="#dcdff2" stroke="#444a78"/><path d="M2 9 10 11 16 5M10 11V15M5 6 12 8" stroke="#444a78"/><path d="M7 5 12 6" stroke="#d83030"/></svg></button>
  <button class="sb wide" aria-label="捕捉"><svg class="i" viewBox="0 0 18 16"><path d="M2 7Q4 0 9 4L9 8" stroke="#1c2c78" stroke-width="2"/><circle cx="12" cy="11" r="3.500" stroke="#d83838"/><path d="M12 5V16M7 11H17" stroke="#444"/></svg></button>
  <button class="sb wide" aria-label="工具"><svg class="i" viewBox="0 0 18 16"><path d="M1 5Q5 0 10 4L14 7V15H11V8L5 7Z" fill="#999" stroke="#888"/></svg></button>
  <span class="sep"></span>
  <button class="sb" aria-label="矩形"><svg class="i" viewBox="0 0 18 16"><path d="M2 2H16V14H2Z" stroke="#222" stroke-dasharray="2 2" stroke-width="1.500"/><circle cx="2" cy="2" r="2" fill="#e01818" stroke="none"/><circle cx="16" cy="14" r="2" fill="#e01818" stroke="none"/></svg></button><button class="dd" aria-label="矩形选项"><i class="tri"></i></button>
  <span class="sep"></span>
  <label class="combo rule"><select aria-label="面规则"><option>相切面</option></select><i class="arr"></i></label>
  <label class="combo rule off"><select disabled aria-label="曲线规则"><option>相切曲线</option></select><i class="arr"></i></label>
  <button class="sb wide" aria-label="在相交处停止"><svg class="i" viewBox="0 0 18 16"><path d="M1 4H17M5 1V15M13 1V15" stroke="#a4797b" stroke-width="1.500"/></svg></button>
  <button class="sb wide" aria-label="跟随圆角"><svg class="i" viewBox="0 0 18 16"><path d="M1 4H17M5 1V15M13 1V15M9 4V7L6 10" stroke="#a4858a" stroke-width="1.500"/></svg></button>
  <button class="sb wide" aria-label="路径"><svg class="i" viewBox="0 0 18 16"><circle cx="9" cy="8" r="7" fill="#9d8c92" stroke="#7f7078"/><path d="M5 13V5H10V9L14 11" stroke="#5a6088"/></svg></button>
  <span class="sep"></span>
  <button class="sb on" aria-label="实体"><svg class="i" viewBox="0 0 18 16"><path d="M1 4 9 1 17 4V12L9 16 1 12Z" fill="#4c98f4" stroke="#2c60b8"/><path d="M1 4 9 1 17 4 9 7Z" fill="#fff" stroke="#9ab"/><path d="M1 4 9 7V16L1 12Z" fill="#8ac4ff" stroke="none"/><path d="M9 2V9L14 12" stroke="#d83050"/></svg></button>
  <button class="over end" aria-label="更多"><i class="tri"></i></button>
</div>

<div class="cue">
  <output class="prompt">选择要凸起的面</output>
  <output class="state"></output>
  <span class="cell"></span><span class="cell lg"></span>
  <button class="full" aria-label="全屏"><svg class="i" viewBox="0 0 14 14"><path d="M1 4V1H4M10 1H13V4M13 10V13H10M4 13H1V10" stroke="#555"/><path d="M3 4H11V10H3Z" fill="#5a9cf0" stroke="#1c3c78"/></svg></button>
</div>

<main class="work">
  <div class="rail"></div>
  <div class="scene">
    <svg viewBox="0 229 1019 512" preserveAspectRatio="xMidYMid slice" fill="none">
      <path d="M173 494 139 685 325 760 513 741 551 535Z" fill="url(#skin)"/>
      <ellipse cx="362" cy="511" rx="190" ry="128" transform="rotate(10 362 511)" fill="url(#skin)"/>
      <g stroke="#f09a44">
        <path d="M182 463 147 652M199 437 163 636" stroke-width="1.500" stroke="#dd8c38"/>
        <path d="M219 414 183 620M246 401 208 606" stroke-width="3"/>
        <path d="M273 392 237 595" stroke-width="3.500" stroke="#fbb04c"/>
        <path d="M307 386 270 591" stroke-width="5" stroke="#ffc457"/>
        <path d="M339 384 302 590" stroke-width="1.500" stroke="#fdbf40" stroke-dasharray="22 3"/>
        <path d="M375 387 338 592M441 405 405 612" stroke-width="6" stroke="#ffd062"/>
        <path d="M473 422 436 627" stroke-width="3" stroke="#fcb44a"/>
        <path d="M498 438 461 643" stroke-width="4.500" stroke="#fbaa4c"/>
        <path d="M521 460 483 667M536 483 498 687" stroke-width="3"/>
        <path d="M547 512 510 708" stroke-width="2"/>
        <path d="M543 580 515 725" stroke-width="1" stroke-dasharray="3 4"/>
      </g>
      <ellipse cx="325" cy="721" rx="190" ry="129" transform="rotate(10 325 721)" fill="#42494b" stroke="#f39a45" stroke-width="3"/>
      <ellipse cx="324" cy="719" rx="141" ry="95" transform="rotate(10 324 719)" fill="url(#bore)" stroke="#283036"/>
      <ellipse cx="362" cy="511" rx="190" ry="128" transform="rotate(10 362 511)" stroke="#f39a45" stroke-width="3"/>
      <path d="M362 513 454 538M362 513 345 582M362 513 353 560M426 525 451 537 428 533ZM338 550 346 582 358 562ZM349 548 352 582" stroke="#bec4c8" stroke-width="1.500"/>
      <g stroke="#242b30" stroke-width="2" stroke-linejoin="round">
        <path d="M281 402 286 398 349 396 357 401 364 418 362 429 284 430Z" fill="#9cc5dc"/>
        <path d="M282 409 311 406 312 423 285 429ZM328 410 355 405 363 420 361 429 328 428Z" fill="#435866"/>
        <path d="M306 428 328 428 320 488 301 488 299 466Z" fill="#9cc5dc"/>
        <path d="M314 428 328 428 319 486 311 466Z" fill="#5f7f92"/>
        <path d="M299 466 311 466 319 487 301 488Z" fill="#35454f"/>
      </g>
      <path d="M287 418 361 416 359 424 285 426ZM314 430 304 486H317L327 430" stroke="#6cab57" stroke-width="1.500"/>
      <g class="curves">
        <text x="338" y="487" transform="rotate(9 338 487)" font-size="110">e</text>
        <text x="404" y="508" transform="rotate(19 404 508)" font-size="104">x</text>
        <text x="466" y="541" transform="rotate(9 466 541)" font-size="100">t</text>
      </g>
      <g fill="#0b9a64"><circle cx="389" cy="407" r="5"/><path d="M386 404 389 399 391 404Z"/><circle cx="318" cy="436" r="5"/><circle cx="326" cy="446" r="5"/><path d="M388 382 395 376 397 391 390 393Z" fill="#0a6c46"/></g>
      <path d="M317 399H344V414H317ZM312 414H339V429H312Z" fill="#eeeeec" stroke="#9a9a98"/>
      <g class="tags"><text x="319" y="411">拔模</text><text x="314" y="426">截面</text></g>
      <g class="axes" stroke-width="2"><path d="M49 689 76 696" stroke="#0cc68a"/><path d="M49 689 42 705" stroke="#ee2c2c"/><path d="M49 689 46 708" stroke="#2c2cee"/><path d="M47 686H52V691H47Z" fill="#a5a5a5"/><text x="81" y="701" fill="#0cb47e">Y</text><text x="38" y="713" fill="#ee2c2c">X</text><text x="42" y="717" fill="#2c2cee">Z</text></g>
    </svg>
  </div>

  <section class="dialog" aria-label="凸起">
    <div class="caption">
      <button class="lite" aria-label="上一个"><svg class="i" viewBox="0 0 12 12"><path d="M9 2 3 6 9 10" stroke="#555" stroke-width="2"/></svg></button>
      <button aria-label="固定"><svg class="i" viewBox="0 0 12 12"><path d="M2 2 8 8" stroke="#fff" stroke-width="2"/><path d="M10 4V10H4Z" fill="#fff" stroke="none"/></svg></button>
      <h1>凸起</h1>
      <button aria-label="重置"><svg class="i" viewBox="0 0 12 12"><path d="M6 2Q11 3 10 7 8 11 3 9" stroke="#fff" stroke-width="2"/><path d="M5 6 1 9 5 11Z" fill="#fff" stroke="none"/></svg></button>
      <button aria-label="折叠"><svg class="i" viewBox="0 0 12 12"><path d="M1 5H11" stroke="#fff" stroke-width="2"/></svg></button>
      <button aria-label="关闭"><svg class="i" viewBox="0 0 12 12"><path d="M1 1 11 11M11 1 1 11" stroke="#fff" stroke-width="2.500"/></svg></button>
      <button class="lite" aria-label="下一个"><svg class="i" viewBox="0 0 12 12"><path d="M3 2 9 6 3 10" stroke="#555" stroke-width="2"/></svg></button>
    </div>
    <div class="frame">
      <div class="scroller">
        <div class="pane">
          <h2>截面<button aria-label="折叠截面"><svg class="i"><use href="#up"/></svg></button></h2>
          <div class="body one"><div class="row"><svg class="i tick"><use href="#tick"/></svg><span>选择曲线<em>(1)</em></span>
            <button class="mini dim" aria-label="绘制截面"><svg class="i" viewBox="0 0 24 24"><path d="M2 3H11V12H2ZM2 14H7V22H2ZM9 14H22V22H9Z" stroke="#999" stroke-width="2"/><path d="M12 15 20 5" stroke="#b2aa98" stroke-width="4"/></svg></button><button class="large" aria-label="曲线"><svg class="i" viewBox="0 0 26 26"><path d="M2 2V22M2 3 9 8H25" stroke="#333" stroke-width="1.500"/><path d="M2 5Q22 5 23 24" stroke="#0c1ee8" stroke-width="3"/><circle cx="17" cy="17" r="4" stroke="#222" stroke-width="1.500"/><path d="M18 11 24 15" stroke="#222" stroke-width="1.500"/></svg></button></div></div>
          <h2>要凸起的面<button aria-label="折叠要凸起的面"><svg class="i"><use href="#up"/></svg></button></h2>
          <div class="body one"><div class="row active"><svg class="i tick"><use href="#tick"/></svg><span>选择面<em>(1)</em></span>
            <button class="large hot" aria-label="面"><svg class="i" viewBox="0 0 26 26"><path d="M3 8 13 3 23 8 13 12Z" fill="#fff" stroke="#777"/><path d="M3 8 13 12V23L3 18Z" fill="url(#gy)" stroke="#e03818" stroke-width="1.500"/><path d="M13 12 23 8V18L13 23Z" fill="#eee" stroke="#777"/></svg></button></div></div>
          <h2>凸起方向<button aria-label="折叠凸起方向"><svg class="i"><use href="#up"/></svg></button></h2>
          <div class="body one"><div class="row"><svg class="i tick"><use href="#tick"/></svg><span>指定方向<em>(1)</em></span>
            <button class="mini" aria-label="矢量构造器"><svg class="i" viewBox="0 0 24 24"><path d="M13 18V3M10 8 13 2 16 8" stroke="#d81818" stroke-width="2"/><path d="M3 13Q3 19 9 19M6 16 10 19 7 23" stroke="#e88018" stroke-width="2"/></svg></button><button class="large split" aria-label="矢量"><svg class="i" viewBox="0 0 26 26"><path d="M1 11Q5 8 8 11V23Q4 26 1 23Z" fill="#e6efe6" stroke="#444"/><path d="M11 23 16 19H25L20 24Z" fill="#e6efe6" stroke="#444"/><path d="M9 20V4M18 20V7" stroke="#d81818" stroke-width="2"/><path d="M6 8 9 1 12 8ZM15 11 18 4 21 11Z" fill="#d81818" stroke="none"/></svg><i class="arr"></i></button></div></div>
          <h2>端盖<button aria-label="折叠端盖"><svg class="i"><use href="#up"/></svg></button></h2>
          <div class="body form">
            <div class="row"><label for="geo">几何体</label><span class="combo"><select id="geo"><option>凸起的面</option></select><i class="arr"></i></span></div>
            <div class="row"><label for="loc">位置</label><span class="combo"><select id="loc"><option>偏置</option></select><i class="arr"></i></span></div>
            <div class="row mid"><label for="dist">距离</label><span class="combo num"><input id="dist" value="3"><small>mm</small><i class="arr down"></i></span></div>
            <div class="row tall"><label for="rev">反向</label><button id="rev" class="mini" aria-label="反向"><svg class="i" viewBox="0 0 24 24"><path d="M3 3 22 20" stroke="#222" stroke-width="2"/><path d="M4 21 9 15M15 9 20 3" stroke="#1c38e0" stroke-width="2.500"/><path d="M22 1V8L15 3ZM2 23V16L9 21Z" fill="#1c38e0" stroke="none"/></svg></button></div>
          </div>
          <h2>拔模<button aria-label="折叠拔模"><svg class="i"><use href="#up"/></svg></button></h2>
          <div class="body form">
            <div class="row"><label for="dr">拔模</label><span class="combo"><select id="dr"><option>从端盖</option></select><i class="arr"></i></span></div>
            <div class="row vec"><svg class="i tick"><use href="#tick"/></svg><span>指定脱模方向<em>(1)</em></span>
              <button class="mini" aria-label="矢量构造器"><svg class="i" viewBox="0 0 24 24"><path d="M13 17V3M10 8 13 2 16 8" stroke="#d81818" stroke-width="2"/><path d="M3 13Q3 19 9 19M6 16 10 19 7 23" stroke="#e88018" stroke-width="2"/><path d="M13 22H23" stroke="#111" stroke-width="2" stroke-dasharray="2 2"/></svg></button><button class="large split" aria-label="自动矢量"><svg class="i" viewBox="0 0 26 26"><path d="M7 24V4" stroke="#c01818" stroke-width="2"/><path d="M3 9 7 1 11 9Z" fill="#c01818" stroke="none"/><path d="M21 2 11 13H16L10 22 23 10H18Z" fill="#ffe820" stroke="#8c7410"/></svg><i class="arr"></i></button></div>
            <div class="row mid"><label for="ang">角度 1</label><span class="combo num"><input id="ang" value="5.000000"><small>deg</small><i class="arr down"></i></span></div>
            <h3>列表<svg class="i"><use href="#up"/></svg></h3>
          </div>
        </div>
        <div class="scroll"><button aria-label="向上滚动"><svg class="i"><use href="#up"/></svg></button><div class="thumb"></div><div class="track"></div><button class="dn" aria-label="向下滚动"><svg class="i"><use href="#up"/></svg></button></div>
      </div>
      <div class="actions"><button class="ok">确定</button><button>应用</button><button>取消</button></div>
    </div>
  </section>

  <svg class="notes" viewBox="0 212 1019 529" preserveAspectRatio="xMidYMid slice" fill="none" stroke="#c00008" stroke-width="3">
    <path d="M719 252 350 401" marker-end="url(#head)"/><path d="M728 347 437 404" marker-end="url(#head)"/><path d="M728 431 397 411" marker-end="url(#head)"/><path d="M738 432 946 431" marker-end="url(#head)"/><path d="M891 239 941 238"/>
  </svg>
</main>
<footer class="foot"></footer>
</div>
</body>
</html>
```

FILE: styles.css
```css
* { box-sizing: border-box; }
body {
  margin: 0;
  font-family: "Noto Sans CJK SC", sans-serif;
  font-size: 12px;
  line-height: 16px;
  color: #000;
  background: #d2d2d2;
}
button, select, input { font: inherit; color: inherit; padding: 0; margin: 0; border: 0; background: none; border-radius: 0; }
h1, h2, h3 { margin: 0; font-size: 13px; font-weight: 700; }
.defs { position: absolute; width: 0; height: 0; }
.i { display: block; flex: none; fill: none; stroke: #222; }

.app { display: flex; flex-direction: column; height: 100vh; border-top: 3px solid #1a1a1a; overflow: hidden; }

/* menu */
.menubar { display: flex; align-items: center; flex: none; height: 24px; padding: 0 4px 2px 2px; background: #e4e4e4; }
.logo { width: 18px; height: 18px; margin-right: 5px; }
.menu { display: flex; gap: 12px; flex: 1; white-space: nowrap; }
.menu a { display: flex; color: #000; text-decoration: none; }
.menu span { width: 19px; text-align: center; font-family: "Liberation Serif", serif; }
.winbtns { display: flex; gap: 3px; }
.winbtns button { width: 16px; height: 16px; border: 1px solid #777; border-radius: 3px; background: #f2f2f2; display: grid; place-items: center; }
.winbtns svg { width: 13px; height: 13px; }

/* toolbars */
.bar { display: flex; flex: none; height: 34px; background: #cdcdcd; white-space: nowrap; overflow: hidden; }
.grp { display: flex; align-items: center; background: linear-gradient(#e2e2e2, #d3d3d3); border-top: 1px solid #f4f4f4; border-bottom: 1px solid #bababa; border-right: 1px solid #b4b4b4; box-shadow: inset 1px 0 #f2f2f2; }
.grp.apart { margin-left: 32px; }
.grip { flex: none; width: 8px; height: 22px; background: radial-gradient(circle, #999 1px, transparent 2px) center / 4px 4px repeat-y; }
.grip.first { width: 3px; background-position: left; }
.tb { flex: none; width: 31px; height: 30px; display: grid; place-items: center; }
.tb svg { width: 23px; height: 23px; }
.tb.on, .sb.on { background: #fff; border: 1px solid #555; border-radius: 3px; }
.letter { font-family: "Liberation Serif", serif; font-weight: 700; font-size: 26px; }
.start { display: flex; align-items: center; flex: none; width: 67px; gap: 3px; padding-left: 2px; }
.start .big { width: 25px; height: 25px; }
.tri { display: block; width: 0; height: 0; border: 3px solid transparent; border-top-color: #000; border-bottom: 0; }
.dd { flex: none; width: 12px; display: grid; place-items: center; }
.over { flex: none; width: 13px; height: 26px; display: flex; justify-content: center; align-items: flex-end; }
.more { flex: none; width: 16px; height: 30px; margin-left: 26px; padding-bottom: 3px; display: flex; flex-direction: column; justify-content: space-between; align-items: center; }
.more b { font-family: "DejaVu Sans", sans-serif; font-size: 13px; line-height: 16px; }
.sep { flex: none; width: 6px; height: 30px; background: linear-gradient(90deg, transparent 2px, #aaa 2px, #aaa 3px, #fff 3px, #fff 4px, transparent 4px); }
.sep.wide { width: 14px; }

/* drop-down fields */
.combo { display: flex; flex: none; height: 18px; border: 2px solid #6e6e6e; border-right-color: #999; border-bottom-color: #999; border-radius: 4px; background: #fff; overflow: hidden; }
.combo select { appearance: none; flex: 1; min-width: 0; height: 13px; line-height: 13px; padding-left: 1px; overflow: hidden; }
.arr { flex: none; width: 16px; display: grid; place-items: center; background: linear-gradient(#e2f1fc, #6cb0ec); border-left: 1px solid #5b8fc8; }
.arr::after { content: ""; border: 5px solid transparent; border-top: 6px solid #111; border-bottom: 0; }
.combo.off { border-color: #aaa; background: #dedede; }
.combo.off select { color: #a4a49e; opacity: 1; }
.off .arr { background: #eee; border-color: #ccc; }
.off .arr::after { border-top-color: #aaa; }
.layer { width: 38px; }
.type { width: 110px; }
.scope { width: 116px; margin: 0 6px 0 8px; }
.rule { width: 117px; margin: 0 4px 0 3px; }

.selbar { display: flex; align-items: center; flex: none; height: 28px; border-top: 1px solid #8e8e8e; border-bottom: 1px solid #b0b0b0; background: linear-gradient(#c6c6c6, #d8d8d8); white-space: nowrap; }
.sb { flex: none; width: 22px; height: 22px; display: grid; place-items: center; }
.sb.wide { width: 23px; }
.sb svg { width: 18px; height: 16px; }
.selbar .dd { width: 12px; }
.over.end { height: 22px; margin-left: auto; margin-right: 2px; padding-bottom: 2px; }

.cue { display: flex; flex: none; height: 21px; background: linear-gradient(#dedede, #d2d2d2); border-top: 1px solid #eee; }
.prompt { flex: 0 0 46%; line-height: 18px; font-size: 13px; font-weight: 700; border-right: 1px solid #aaa; }
.state { flex: 1; border-right: 1px solid #aaa; box-shadow: inset 1px 0 #fff; }
.cell { width: 20px; border-right: 1px solid #aaa; box-shadow: inset 1px 0 #fff; }
.cell.lg { width: 36px; }
.full { width: 22px; display: grid; place-items: center; }
.full svg { width: 14px; height: 14px; }

/* graphics area */
.work { position: relative; display: flex; flex-direction: column; flex: 1; min-height: 0; }
.rail { flex: none; height: 17px; background: linear-gradient(#a8a8a8, #bdbdbd 5px, #b4b4b4 6px, #dcdcdc 8px, #e4e4e4 14px, #777 16px); }
.scene { flex: 1; min-height: 0; background: linear-gradient(#0a80c2, #59abd5 29%, #a0c8e0 52%, #e6e8ea 78%); }
.scene > svg { display: block; width: 100%; height: 100%; }
.curves { font-family: "DejaVu Sans", sans-serif; stroke: #2750b4; stroke-width: 2; }
.tags { font-size: 12px; fill: #000; }
.axes { font-family: "Liberation Sans", sans-serif; font-size: 9px; }
.axes text { stroke: none; }
.notes { position: absolute; inset: 0; width: 100%; height: 100%; pointer-events: none; filter: drop-shadow(2px 4px 2px rgba(0, 0, 0, .35)); }
.foot { flex: none; height: 3px; background: #3c68b0; border-top: 1px solid #f4f4f4; }

/* dialog */
.dialog { position: absolute; top: 0; right: 0; bottom: 0; width: 304px; display: flex; flex-direction: column; }
.dialog::before { content: ""; position: absolute; top: 17px; right: 159px; width: 51px; height: 4px; background: #fafafa; }
.caption { display: flex; flex: none; align-self: flex-end; height: 21px; gap: 1px; padding: 1px 0; background: #777; }
.caption button { width: 19px; display: grid; place-items: center; background: linear-gradient(#444, #111); }
.caption button svg { width: 12px; height: 12px; }
.caption .lite { width: 18px; background: #e2e2e2; }
.caption h1 { width: 41px; padding-left: 4px; color: #fff; background: #1c1c1c; line-height: 18px; }
.frame { flex: 1; min-height: 0; display: flex; flex-direction: column; padding: 4px 6px 0 5px; background: #e9e9e9; border: 2px solid #858585; border-top-width: 1px; border-bottom: 7px solid #161616; border-radius: 0 0 6px 6px; }
.scroller { flex: 1; min-height: 0; display: flex; gap: 2px; overflow: hidden; }
.pane { flex: 1; min-width: 0; overflow: hidden; }
.pane h2 { display: flex; align-items: center; height: 22px; padding-left: 6px; background: linear-gradient(#fff, #eaeaea 50%, #d5d5d5 52%, #e2e2e2); border-bottom: 2px solid #8c8c8c; }
.pane h2 button { margin-left: auto; width: 23px; height: 20px; display: grid; place-items: center; border-left: 1px solid #aaa; }
.pane h2 svg, .pane h3 svg { width: 12px; height: 10px; }
.body { background: #d2d2d2; border-left: 1px solid #999; }
.one { padding: 8px 9px 10px 6px; }
.form { padding: 6px 9px 8px 6px; }
.row { display: flex; align-items: center; height: 22px; }
.row .tick { width: 14px; height: 14px; margin: 0 4px 0 2px; }
.row em { font-style: normal; font-family: "Liberation Mono", monospace; font-size: 10px; margin-left: 8px; }
.row > span:not(.combo), .row > label { margin-right: auto; }
.one .row { height: 30px; }
.row.active { border-radius: 6px; background: linear-gradient(90deg, #e2a264, #dfae7e 40%, #d2d2d2 85%); }
.row.mid { height: 24px; }
.row.tall { height: 26px; }
.row.vec { height: 34px; }
.row .combo { width: 107px; height: 19px; }
.row .combo select { height: 14px; line-height: 14px; padding-left: 2px; }
.row .num { height: 21px; background: #d4d4d4; }
.num input { width: 52px; padding-left: 2px; background: #fff; font-family: "Liberation Mono", monospace; font-size: 10px; }
.num small { flex: 1; font-family: "Liberation Mono", monospace; font-size: 10px; text-align: center; line-height: 18px; }
.arr.down::before { content: ""; width: 4px; height: 5px; background: #111; }
.arr.down { align-content: center; }
.mini, .large { flex: none; display: grid; place-items: center; border: 2px solid #777; border-radius: 4px; background: linear-gradient(#fff, #d0d0d0); }
.mini { width: 22px; height: 22px; }
.mini svg { width: 18px; height: 18px; }
.mini.dim { border-color: #b0b0b0; background: #dedede; }
.large { width: 30px; height: 30px; margin-left: 4px; }
.large svg { width: 24px; height: 24px; }
.large.hot { border-color: #6c5844; background: linear-gradient(#f89850, #ffdcb8); outline: 1px dotted #222; outline-offset: -3px; }
.large.split { width: 43px; display: flex; align-items: center; justify-content: space-between; }
.split .arr { width: 15px; height: 26px; }
.pane h3 { display: flex; justify-content: space-between; align-items: center; height: 20px; margin-top: 2px; padding: 0 8px; background: #bebebe; border: 2px solid #999; }
.scroll { flex: none; width: 15px; display: flex; flex-direction: column; background: #f5f5fb; }
.scroll button { height: 18px; display: grid; place-items: center; border: 1px solid #9ab4e8; border-radius: 3px; background: #c6d6fb; }
.scroll button svg { width: 12px; height: 10px; }
.scroll .dn svg { transform: rotate(180deg); }
.thumb { flex: 284; margin-top: 2px; border: 1px solid #8fb0ec; border-radius: 3px; background: linear-gradient(#edf3ff, #edf3ff) center / 7px 8px no-repeat, linear-gradient(90deg, #d0defd, #bcd0fb); }
.track { flex: 136; }
.actions { display: flex; flex: none; justify-content: flex-end; gap: 7px; margin-top: 3px; padding: 5px 9px 11px 0; border-top: 1px solid #999; }
.actions button { width: 52px; height: 19px; border: 2px solid #777; border-radius: 4px; background: linear-gradient(#fff, #dcdcdc); line-height: 14px; }
.actions .ok { border-color: #3d7a3a; background: linear-gradient(#5cb65c, #b8f0a0); }
```
